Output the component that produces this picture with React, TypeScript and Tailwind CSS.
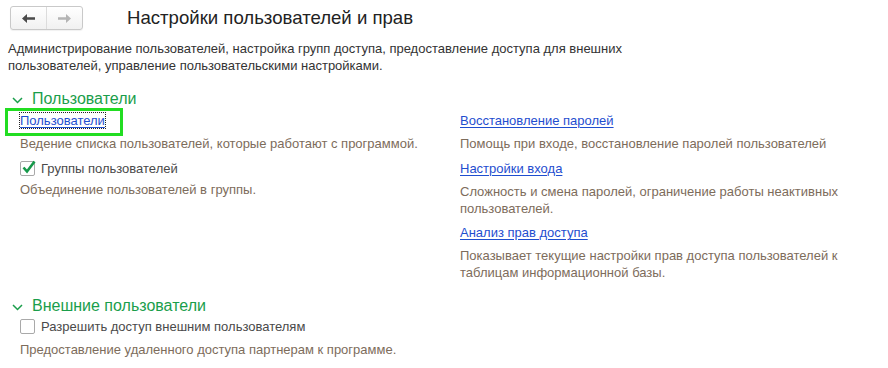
import React from 'react';

const font = { fontFamily: '"Liberation Sans", Arial, sans-serif' };

const Chevron = () => (
  <svg width="11" height="7" viewBox="0 0 11 7" className="mr-[9px] mt-[2px]">
    <path d="M1 1 L5.5 5.5 L10 1" fill="none" stroke="#1a9e4b" strokeWidth="1.5" />
  </svg>
);

const Arrow = ({ dir, color }: { dir: 'left' | 'right'; color: string }) => (
  <svg width="13" height="9" viewBox="0 0 13 9" style={{ transform: dir === 'right' ? 'scaleX(-1)' : undefined }}>
    <path d="M0 4.5 L5 0 L5 3.3 L13 3.3 L13 5.7 L5 5.7 L5 9 Z" fill={color} />
  </svg>
);

const Checkbox = ({ checked }: { checked?: boolean }) => (
  <span className="relative inline-block w-[15px] h-[15px] rounded-[2px] border border-[#a9a9a9] bg-white shrink-0">
    {checked && (
      <svg width="16" height="16" viewBox="0 0 16 16" className="absolute left-[0px] top-[-3px]">
        <path d="M2.5 8.5 L6 12.5 L13.5 2.5" fill="none" stroke="#16994a" strokeWidth="2.6" />
      </svg>
    )}
  </span>
);

const SectionHeader = ({ title }: { title: string }) => (
  <div className="flex items-center pl-[12px] h-[20px] text-[16px] leading-[20px] text-[#1a9e4b]">
    <Chevron />
    <span>{title}</span>
  </div>
);

const Link = ({ children }: { children: React.ReactNode }) => (
  <a className="text-[#1f4ecf] underline underline-offset-[2px] decoration-[1px] cursor-pointer">{children}</a>
);

const Desc = ({ children, className }: { children: React.ReactNode; className?: string }) => (
  <div className={'text-[#7d6c5b] ' + (className ?? '')}>{children}</div>
);

export default function App() {
  return (
    <div className="w-[888px] h-[368px] bg-white text-[13px] leading-[17px] text-[#333]" style={font}>
      {/* Header */}
      <div className="flex items-center pt-[6px] pl-[10px] h-[30px]">
        <div className="flex w-[73px] h-[24px] rounded-[3px] border border-[#c9c9c9] bg-gradient-to-b from-white to-[#f1f1f1] shadow-[0_1px_1px_rgba(0,0,0,0.06)]">
          <div className="flex-1 flex items-center justify-center border-r border-[#dcdcdc]">
            <Arrow dir="left" color="#4a4a4a" />
          </div>
          <div className="flex-1 flex items-center justify-center">
            <Arrow dir="right" color="#b4b4b4" />
          </div>
        </div>
        <h1 className="ml-[44px] text-[18.6px] leading-[24px] text-[#222]">Настройки пользователей и прав</h1>
      </div>

      <div className="mt-[10px] px-[8px] w-[650px]">
        Администрирование пользователей, настройка групп доступа, предоставление доступа для внешних пользователей, управление пользовательскими настройками.
      </div>

      {/* Section: users */}
      <div className="mt-[15px]">
        <SectionHeader title="Пользователи" />
        <div className="flex mt-[3px]">
          <div className="w-[440px] pl-[20px]">
            <div className="relative inline-block">
              <span className="outline outline-1 outline-dotted outline-[#222] outline-offset-[0px]">
                <Link>Пользователи</Link>
              </span>
              <span className="absolute left-[-15px] right-[-18px] top-[-4px] bottom-[-7px] border-[3px] border-[#22dd22] pointer-events-none" />
            </div>
            <Desc className="mt-[6px]">Ведение списка пользователей, которые работают с программой.</Desc>
            <div className="flex items-center gap-[6px] mt-[8px] text-[#4a4a4a]">
              <Checkbox checked />
              <span>Группы пользователей</span>
            </div>
            <Desc className="mt-[4px]">Объединение пользователей в группы.</Desc>
          </div>
          <div className="w-[410px] pl-[20px]">
            <Link>Восстановление паролей</Link>
            <Desc className="mt-[6px]">Помощь при входе, восстановление паролей пользователей</Desc>
            <div className="mt-[8px]"><Link>Настройки входа</Link></div>
            <Desc className="mt-[6px]">Сложность и смена паролей, ограничение работы неактивных пользователей.</Desc>
            <div className="mt-[7px]"><Link>Анализ прав доступа</Link></div>
            <Desc className="mt-[6px]">Показывает текущие настройки прав доступа пользователей к таблицам информационной базы.</Desc>
          </div>
        </div>
      </div>

      {/* Section: external users */}
      <div className="mt-[15px]">
        <SectionHeader title="Внешние пользователи" />
        <div className="pl-[20px] mt-[2px]">
          <div className="flex items-center gap-[6px] text-[#4a4a4a]">
            <Checkbox />
            <span>Разрешить доступ внешним пользователям</span>
          </div>
          <Desc className="mt-[6px]">Предоставление удаленного доступа партнерам к программе.</Desc>
        </div>
      </div>
    </div>
  );
}
